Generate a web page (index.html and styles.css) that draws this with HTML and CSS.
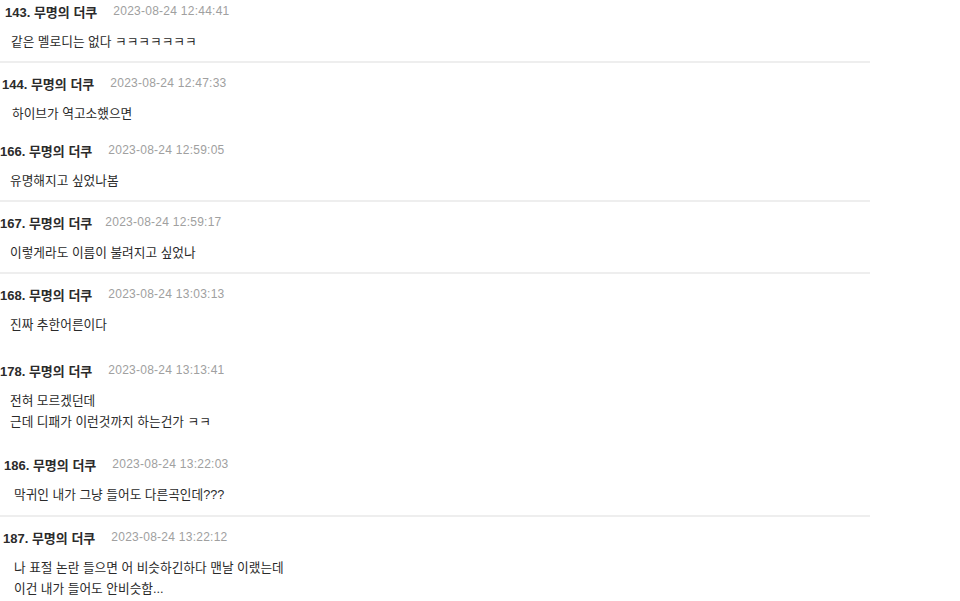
FILE: index.html
```html
<!DOCTYPE html>
<html lang="ko">
<head>
    <meta charset="UTF-8">
    <meta name="viewport" content="width=device-width, initial-scale=1.0">
    <title>댓글</title>
    <link rel="stylesheet" href="styles.css">
</head>
<body>
    <div class="comment-list">
        <!-- 143 -->
        <div class="comment first shift-5">
            <div class="comment-head">
                <span class="comment-name">143. 무명의 더쿠</span>
                <span class="comment-date">2023-08-24 12:44:41</span>
            </div>
            <div class="comment-body indent-6">같은 멜로디는 없다 ㅋㅋㅋㅋㅋㅋㅋ</div>
        </div>

        <div class="comment no-line short shift-2">
            <div class="comment-head">
                <span class="comment-name">144. 무명의 더쿠</span>
                <span class="comment-date">2023-08-24 12:47:33</span>
            </div>
            <div class="comment-body">하이브가 역고소했으면</div>
        </div>

        <div class="comment">
            <div class="comment-head">
                <span class="comment-name">166. 무명의 더쿠</span>
                <span class="comment-date">2023-08-24 12:59:05</span>
            </div>
            <div class="comment-body">유명해지고 싶었나봄</div>
        </div>

        <div class="comment">
            <div class="comment-head">
                <span class="comment-name">167. 무명의 더쿠</span>
                <span class="comment-date narrow">2023-08-24 12:59:17</span>
            </div>
            <div class="comment-body">이렇게라도 이름이 불려지고 싶었나</div>
        </div>

        <div class="comment no-line long">
            <div class="comment-head">
                <span class="comment-name">168. 무명의 더쿠</span>
                <span class="comment-date">2023-08-24 13:03:13</span>
            </div>
            <div class="comment-body">진짜 추한어른이다</div>
        </div>

        <div class="comment no-line medium">
            <div class="comment-head">
                <span class="comment-name">178. 무명의 더쿠</span>
                <span class="comment-date">2023-08-24 13:13:41</span>
            </div>
            <div class="comment-body">전혀 모르겠던데<br>근데 디패가 이런것까지 하는건가 ㅋㅋ</div>
        </div>

        <div class="comment medium shift-4">
            <div class="comment-head">
                <span class="comment-name">186. 무명의 더쿠</span>
                <span class="comment-date">2023-08-24 13:22:03</span>
            </div>
            <div class="comment-body">막귀인 내가 그냥 들어도 다른곡인데???</div>
        </div>

        <div class="comment no-line shift-3">
            <div class="comment-head">
                <span class="comment-name">187. 무명의 더쿠</span>
                <span class="comment-date">2023-08-24 13:22:12</span>
            </div>
            <div class="comment-body indent-11">나 표절 논란 들으면 어 비슷하긴하다 맨날 이랬는데<br>이건 내가 들어도 안비슷함...</div>
        </div>
    </div>
</body>
</html>
```

FILE: styles.css
```css
body {
    margin: 0;
    background-color: #fff;
    font-family: "Liberation Sans", "Noto Sans CJK KR", sans-serif;
    color: #222;
}

.comment-list {
    width: 870px;
}

.comment {
    padding: 9px 0 8px;
    border-bottom: 2px solid #eeeeee;
}

.comment.first {
    padding-top: 0;
}

.comment.no-line {
    border-bottom-color: transparent;
}

/* the screenshot was stitched together, gaps differ */
.comment.short {
    padding-bottom: 3px;
}

.comment.medium {
    padding-bottom: 9px;
}

.comment.long {
    padding-bottom: 12px;
}

.shift-2 { padding-left: 2px; }
.shift-3 { padding-left: 3px; }
.shift-4 { padding-left: 4px; }
.shift-5 { padding-left: 5px; }

.comment-head {
    display: flex;
    align-items: center;
    height: 22px;
    white-space: nowrap;
}

.comment-name {
    font-size: 13px;
    font-weight: bold;
    color: #2b2b2b;
}

.comment-date {
    margin-left: 16px;
    font-size: 12px;
    letter-spacing: 0.25px;
    color: #a0a0a0;
}

.comment-date.narrow {
    margin-left: 13px;
}

.comment-body {
    margin-top: 10px;
    padding-left: 10px;
    font-size: 12.7px;
    line-height: 21px;
    color: #2a2a2a;
}

.comment-body.indent-6 {
    padding-left: 6px;
}

.comment-body.indent-11 {
    padding-left: 11px;
}
```
